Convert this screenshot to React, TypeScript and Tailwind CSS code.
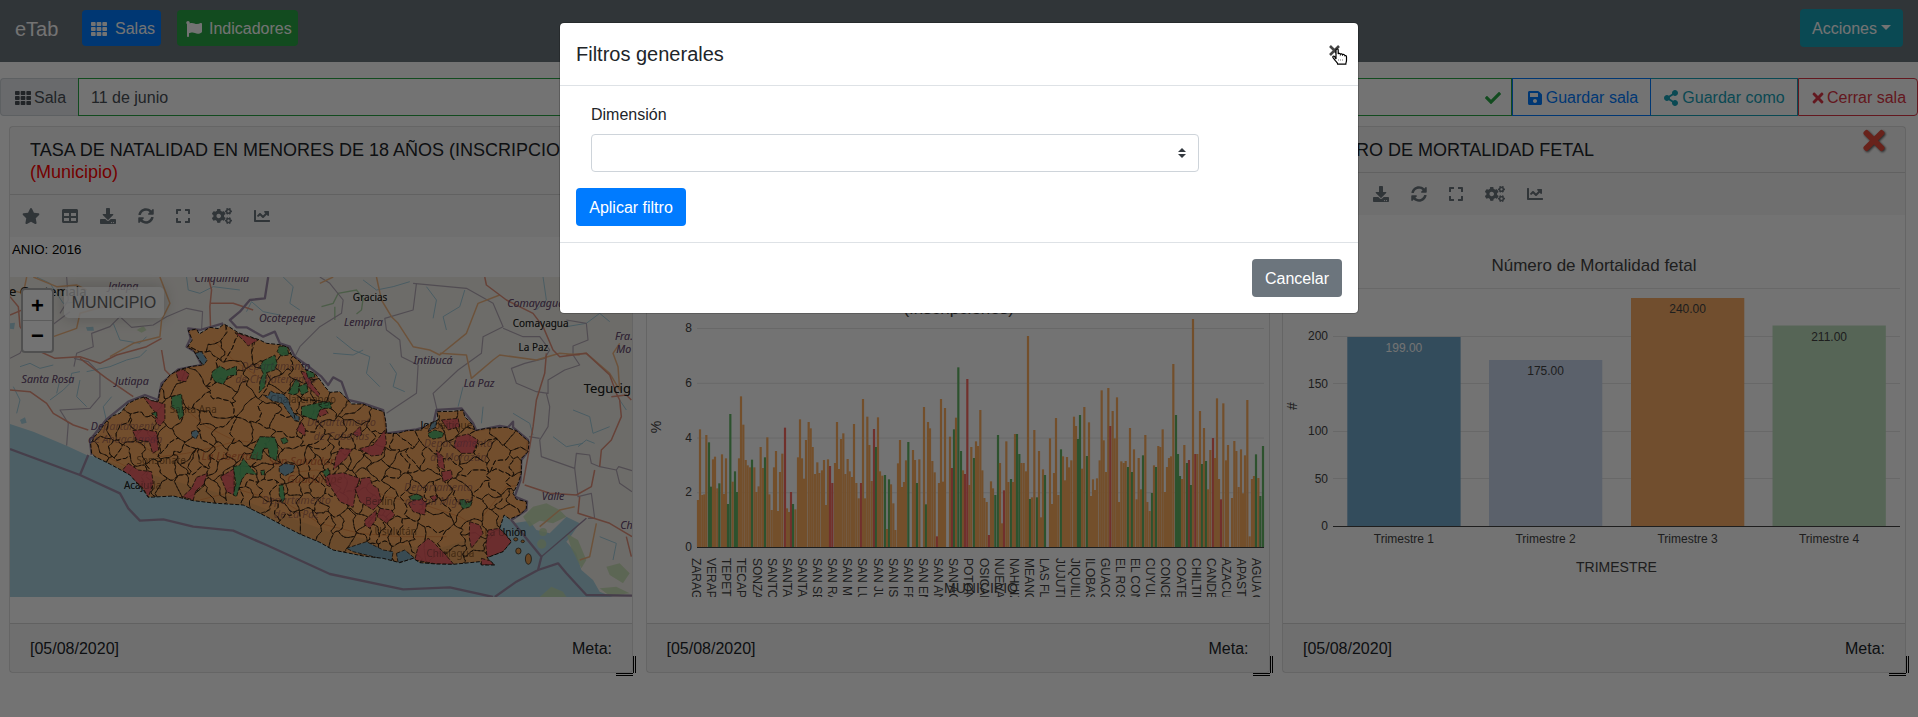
import React from 'react';
import { FaTh, FaFlag, FaCheck, FaSave, FaShareAlt, FaTimes, FaStar, FaTable, FaDownload, FaSyncAlt, FaExpand, FaCogs, FaChartLine } from 'react-icons/fa';

/* ---------- data ---------- */

const COLORS: Record<string, string> = { o: '#ffaf60', g: '#64b666', r: '#fb6a62' };

const RATES =
  '174:600 180:388 187:585 193:583 199:405 207:427g 213:560g 219:478 225:470 232:565 238:550g 246:463 252:582 258:475 264:612g 271:342g 278:545 285:514g 291:576g 297:475 303:289 310:374 317:480 323:496 330:502 336:479g 343:502 349:576 356:559 362:441 369:504 375:472g 382:412 388:583 395:630 402:502 408:453 414:633 420:516 427:461 435:383r 441:625 447:636 453:576r 459:612g 466:628 474:472 480:358 486:475 492:536 498:420 506:366 512:385 518:441 525:522 532:487 538:519 546:511 552:480 558:615 564:478 570:498r 577:549r 585:489 591:366 597:507 603:417 610:400 616:522 623:477 629:514 636:531 642:372 649:549 656:595 663:549r 669:297 675:595 682:350 688:435 695:543 702:387r 708:441g 714:352 720:514 727:527 735:525g 741:687 747:538g 753:553 760:610 766:690 774:490 780:420 786:561 792:546 798:481 805:426g 819:450 825:480 831:549g 838:478 852:321 858:613g 864:366 870:385 877:483 884:517 891:709r 897:549 903:297 909:545 915:324 930:410 936:504r 942:388g 948:353 955:202g 963:453g 969:511 975:522r 982:237r 988:555 994:441 1002:474g 1008:424 1014:438 1021:330 1027:511 1033:594 1040:606 1047:705r 1053:544 1059:565 1066:585g 1074:405g 1080:489 1086:670 1092:571r 1099:424 1105:546 1113:537g 1119:546 1125:402 1131:402g 1138:462g 1144:489 1151:489 1158:514 1164:108 1170:597g 1176:592 1183:390 1191:592g 1197:453 1203:652 1209:508 1215:525g 1230:415 1236:612 1242:519 1248:354 1255:585 1263:448g 1269:469 1275:541 1281:471 1287:502 1294:481 1302:350 1308:378 1314:417g 1320:345g 1326:506 1333:321 1341:468g 1347:367 1353:588 1359:538 1365:570 1371:535 1379:481 1385:271 1391:421 1398:516 1405:264 1411:378r 1418:333 1424:415 1431:292 1437:606 1444:484 1451:489 1457:483 1464:501g 1470:384 1476:516g 1482:448 1490:598 1496:474 1503:568 1509:466g 1516:405 1522:606 1529:633 1536:579g 1542:496 1548:501g 1555:438 1561:441 1568:388 1575:576 1581:501 1587:474 1593:469 1600:192 1608:345g 1614:462g 1620:528g 1626:537 1633:435 1641:489g 1647:480r 1653:555g 1659:57 1666:462r 1672:462 1680:333 1686:492g 1692:384 1698:483g 1704:568 1711:450 1719:414r 1725:474 1731:295 1737:537 1743:598r 1750:310 1758:481 1764:435 1776:594 1783:423 1789:453 1796:561 1803:448 1809:580 1815:466 1822:300 1829:709 1836:537 1842:528 1848:463g 1855:534 1861:588g 1869:438g';

const BARS = RATES.split(' ').map((entry) => {
  const [x, rest] = entry.split(':');
  const tone = /[gr]$/.test(rest) ? rest.slice(-1) : 'o';
  return { x: Number(x), top: parseInt(rest, 10), color: COLORS[tone] };
});

const MUNICIPIOS = [
  'ZARAGOZA', 'VERAPAZ', 'TEPETITAN', 'TECAPAN', 'SONZACATE', 'SANTO T', 'SANTA R', 'SANTA C', 'SAN SEB', 'SAN RAF', 'SAN MIG', 'SAN LUIS', 'SAN JUAN', 'SAN ISID', 'SAN FRA', 'SAN EMI', 'SAN ANT', 'SAN AGU', 'POTONI', 'OSICALA', 'NUEVA E', 'NAHUIZ', 'MEANGU', 'LAS FLO', 'JUJUTLA', 'JIQUILIS', 'ILOBASC', 'GUACO', 'EL ROSA', 'EL CONG', 'CUYULT', 'CONCEP', 'COATEP', 'CHILTIU', 'CANDEL', 'AZACUA', 'APASTE', 'AGUA CA',
];

const QUARTERS = [
  { label: 'Trimestre 1', value: '199.00', x: 1347.3, top: 337, color: '#71a9cc', ink: '#fff' },
  { label: 'Trimestre 2', value: '175.00', x: 1489, top: 360, color: '#cad7ee', ink: '#444' },
  { label: 'Trimestre 3', value: '240.00', x: 1631, top: 298, color: '#fbad66', ink: '#444' },
  { label: 'Trimestre 4', value: '211.00', x: 1772.5, top: 325.5, color: '#bfe0bf', ink: '#444' },
];

/* ---------- map geometry ---------- */

const COUNTRY: [number, number][] = [
  [275, 640], [272, 612], [284, 590], [300, 572], [318, 545], [340, 527], [360, 520], [385, 490], [410, 478], [435, 470], [455, 482], [475, 484], [480, 450], [490, 430], [510, 405], [535, 390], [570, 380], [608, 375], [592, 350], [580, 330], [562, 322], [577, 300], [565, 272], [590, 267], [598, 282], [630, 262], [655, 266], [672, 252], [690, 262], [715, 278], [745, 288], [780, 300], [800, 310], [840, 314], [865, 322], [875, 345], [900, 365], [915, 388], [945, 400], [965, 425], [975, 440], [990, 457], [1020, 455], [1040, 475], [1055, 492], [1090, 492], [1120, 505], [1152, 515], [1158, 545], [1160, 580], [1195, 580], [1220, 572], [1260, 570], [1290, 550], [1315, 540], [1312, 515], [1360, 514], [1390, 510], [1395, 530], [1420, 555], [1426, 572], [1460, 565], [1520, 562], [1550, 572], [1570, 590], [1588, 605], [1585, 635], [1565, 655], [1565, 700], [1555, 730], [1540, 760], [1550, 778], [1580, 785], [1580, 805], [1560, 825], [1530, 837], [1513, 825], [1505, 850], [1500, 865], [1520, 885], [1535, 905], [1510, 935], [1462, 953], [1485, 975], [1445, 975], [1440, 965], [1390, 970], [1360, 973], [1310, 972], [1260, 968], [1240, 955], [1200, 968], [1150, 955], [1090, 948], [1040, 938], [1000, 930], [960, 907], [900, 882], [850, 857], [800, 830], [730, 795], [700, 793], [650, 790], [580, 782], [520, 768], [445, 772], [430, 750], [390, 705], [330, 672], [285, 650],
];

const toPoints = (pts: number[][]) => pts.map((p) => p[0].toFixed(1) + ',' + p[1].toFixed(1)).join(' ');

function inside(x: number, y: number) {
  let hit = false;
  for (let i = 0, j = COUNTRY.length - 1; i < COUNTRY.length; j = i++) {
    const [xi, yi] = COUNTRY[i];
    const [xj, yj] = COUNTRY[j];
    if (yi > y !== yj > y && x < ((xj - xi) * (y - yi)) / (yj - yi) + xi) hit = !hit;
  }
  return hit;
}

/* Bends straight cell edges so neighbouring borders stay shared but look irregular. */
const warp = ([x, y]: number[]) => [
  x + 6 * Math.sin(y / 9 + x / 31) + 4 * Math.sin(y / 4.7),
  y + 7 * Math.sin(x / 11 - y / 37) + 3 * Math.sin(x / 5.3),
];

function buildCells() {
  let seed = 977;
  const rand = () => {
    seed = (seed * 16807) % 2147483647;
    return seed / 2147483647;
  };
  const sites: number[][] = [];
  for (let row = 0; row < 15; row++) {
    for (let col = 0; col < 32; col++) {
      const x = 265 + (col + rand() * 1.3) * 42;
      const y = 250 + (row + rand() * 1.3) * 51;
      const keep = rand();
      const sparse = (y < 560 && x < 900) || (x > 1150 && y > 800);
      if (inside(x, y) && keep > (sparse ? 0.45 : 0.08)) sites.push([x, y]);
    }
  }
  return sites.map((site, index) => {
    let cell: number[][] = [
      [site[0] - 130, site[1] - 130],
      [site[0] + 130, site[1] - 130],
      [site[0] + 130, site[1] + 130],
      [site[0] - 130, site[1] + 130],
    ];
    sites.forEach((other, otherIndex) => {
      if (otherIndex === index || Math.abs(other[0] - site[0]) > 260 || Math.abs(other[1] - site[1]) > 260) return;
      const nx = other[0] - site[0];
      const ny = other[1] - site[1];
      const limit = (nx * (other[0] + site[0]) + ny * (other[1] + site[1])) / 2;
      const next: number[][] = [];
      cell.forEach((a, k) => {
        const b = cell[(k + 1) % cell.length];
        const da = nx * a[0] + ny * a[1] - limit;
        const db = nx * b[0] + ny * b[1] - limit;
        if (da <= 0) next.push(a);
        if (da * db < 0) {
          const t = da / (da - db);
          next.push([a[0] + (b[0] - a[0]) * t, a[1] + (b[1] - a[1]) * t]);
        }
      });
      cell = next;
    });
    const bent: number[][] = [];
    cell.forEach((a, k) => {
      const b = cell[(k + 1) % cell.length];
      for (let s = 0; s < 6; s++) bent.push(warp([a[0] + ((b[0] - a[0]) * s) / 6, a[1] + ((b[1] - a[1]) * s) / 6]));
    });
    return bent;
  });
}

const CELLS = buildCells();

const RED_AREAS = [
  '705,278 740,288 775,300 745,318 730,300', '528,395 550,388 568,402 558,425 535,422', '430,470 465,484 495,492 495,540 480,558 466,545 470,520 455,505',
  '398,572 430,568 470,575 476,630 458,640 448,605 410,600', '385,670 415,690 455,695 460,730 445,772 430,745 368,690', '590,712 623,700 610,735 588,752 580,780 548,770 575,745',
  '662,710 703,686 703,765 680,755', '903,393 925,400 935,430 960,462 955,470 925,440', '890,570 905,545 917,568 915,588', '950,515 975,505 985,520 960,530',
  '975,700 990,690 990,740 980,735', '1155,570 1160,610 1145,645 1115,648 1078,626 1120,615', '1060,580 1082,558 1085,585 1070,590', '1020,625 1058,628 1040,655 1000,690 1008,650',
  '980,705 1030,698 1080,715 1070,745 1060,802 1020,785 995,745', '1085,715 1110,712 1118,735 1135,745 1145,785 1120,810 1080,785 1065,745 1080,735', '1095,840 1130,810 1128,840 1110,865 1095,855', '1140,805 1175,810 1185,825 1160,850 1132,830',
  '1225,790 1260,770 1280,790 1275,825 1240,815', '1255,920 1285,895 1300,905 1318,925 1330,935 1362,973 1310,972 1245,960', '1325,540 1375,535 1380,560 1345,570 1335,555', '1370,590 1405,582 1435,600 1420,640 1385,640 1362,620',
  '1310,630 1330,650 1335,690 1315,680', '1325,695 1355,690 1358,715 1330,725', '1410,845 1440,855 1450,880 1435,900 1415,925 1408,890', '1465,870 1500,865 1535,905 1510,935 1462,953 1458,915', '1445,955 1470,962 1485,975 1445,975', '1290,770 1312,765 1305,785',
];

const GREEN_AREAS = [
  '637,395 660,378 680,390 710,378 710,405 685,408 670,433 645,425 635,408', '790,362 825,345 832,370 825,390 800,398 795,440 778,458 780,425 790,400 780,380', '838,318 862,320 867,345 845,348 832,335',
  '515,470 545,462 548,505 552,525 538,540 530,510 515,500', '888,417 900,430 895,460 880,465 865,460', '895,440 920,430 925,455 905,465', '918,392 940,390 945,410 925,415',
  '905,500 940,492 975,485 1000,490 960,510 950,540 930,535 905,525', '780,590 825,592 835,625 830,663 808,650 805,625 790,625 785,660 750,655 765,620', '842,597 857,592 866,605 850,613', '700,680 720,675 730,655 750,680 772,705 740,700 725,720 710,770 700,765 708,730',
  '838,735 850,735 855,775 848,788 838,765', '968,695 985,685 990,700 978,712', '782,692 795,690 793,705 785,705', '1285,580 1305,570 1332,578 1328,592 1300,597 1287,590', '1227,770 1250,762 1268,770 1260,780 1235,780', '1380,780 1395,778 1400,790 1418,783 1412,800 1390,807 1382,795', '455,520 470,515 472,535 462,525', '955,495 990,485 995,505 970,505',
];

const LAKES = [
  '585,340 605,335 622,360 612,375 598,365', '575,575 590,570 597,580 588,597 575,588', '838,680 855,670 885,675 880,695 855,708 838,695',
  '790,465 805,468 812,452 822,458 850,462 865,478 872,500 895,545 885,542 862,512 848,490 818,483 800,472', '882,520 898,530 898,545 886,540', '1285,575 1295,550 1312,540 1308,562',
  '1040,925 1100,905 1130,920 1150,930 1180,935 1175,965 1120,950 1060,935', '1190,940 1215,930 1245,955 1195,968',
];

const PROVINCE_LINES = [
  'M30 355 L60 340 L90 285 L150 260 L210 215', 'M222 380 L230 340 L280 320 L275 280 L330 260 L360 230 L395 262 L460 255 L500 230 L560 205 L608 215 L605 270 L565 272', 'M222 355 L265 365 L300 400 L300 470 L270 505 L180 510 L205 550 L200 617',
  'M180 220 L205 180 L200 111', 'M960 111 L990 130 L1030 180 L1025 220 L960 260 L900 320 L885 350', 'M1250 130 L1240 210 L1155 235 L1160 270 L1200 300 L1205 350 L1255 375 L1250 460 L1160 520',
  'M1240 130 L1400 145 L1480 190 L1510 260 L1450 290 L1445 340 L1375 390 L1300 460 L1312 510', 'M1510 265 L1570 290 L1620 290 L1650 330 L1635 355 L1575 370 L1535 385 L1550 430 L1610 455 L1645 460 L1645 420 L1695 390 L1740 375 L1720 345 L1720 318 L1765 300 L1760 250 L1700 240',
  'M1640 460 L1650 500 L1645 560 L1620 600 L1625 650 L1725 685 L1730 640 L1770 645 L1775 670 L1800 680 L1850 690 L1857 680 L1897 692', 'M1725 685 L1735 770 L1775 760 L1785 835 L1765 835', 'M1850 690 L1860 730 L1897 755', 'M1588 590 L1620 595',
];

const RIVERS = [
  'M60 380 L90 370 L120 385 L160 375', 'M150 480 L190 450 L210 430 L215 400 L240 395', 'M260 395 L330 380 L380 360 L420 350 L440 330', 'M320 545 L310 500 L335 470', 'M340 250 L360 300 L420 310 L440 290', 'M110 111 L150 130 L190 190 L240 185',
  'M850 111 L880 140 L870 190 L900 210', 'M560 111 L565 150 L600 160 L640 140 L720 150', 'M740 215 L755 185 L790 215 L840 225', 'M1010 290 L1060 330 L1110 350 L1100 400 L1140 440', 'M1000 340 L1060 345 L1090 330', 'M1170 370 L1190 400 L1180 440 L1215 455',
  'M1090 120 L1130 150 L1180 140 L1230 125', 'M1280 140 L1310 180 L1300 235', 'M1395 150 L1380 200 L1330 230 L1340 270', 'M1450 500 L1445 550', 'M1630 111 L1640 180 L1610 210', 'M1720 510 L1770 530 L1780 580 L1830 560', 'M1660 590 L1700 620 L1750 610', 'M1700 260 L1760 250 L1800 220 L1830 245', 'M1735 620 L1760 600 L1785 610', 'M1390 440 L1375 500', 'M1800 890 L1850 910 L1840 960', 'M1540 520 L1590 550 L1600 585', 'M1860 480 L1880 510', 'M40 440 L60 480 L50 520', 'M180 420 L170 460', 'M240 420 L230 470 L260 500',
];

const ORANGE_ROADS = [
  'M1130 111 L1145 180 L1175 230 L1195 250 L1240 320 L1290 330 L1320 345 L1400 280 L1435 190 L1500 165', 'M1320 340 L1400 345 L1415 415 L1480 360 L1500 345 L1610 360 L1680 340 L1740 345', 'M1700 345 L1760 340 L1830 400 L1860 450 L1855 380 L1840 340 L1860 310', 'M480 111 L510 190 L485 240 L480 290 L400 310 L330 350', 'M120 330 L160 290 L230 265 L240 220 L310 200', 'M1620 860 L1680 810 L1725 800', 'M1790 850 L1770 950 L1740 960', 'M30 150 L70 160 L80 111', 'M100 111 L170 140 L230 135 L260 150', 'M960 130 L1000 111',
];

const RED_ROADS = [
  'M30 170 L55 200 L60 260 L110 330 L165 355 L240 350 L300 370 L350 345 L440 320 L485 295', 'M240 355 L320 415 L400 470', 'M30 450 L90 455 L140 490 L160 520 L220 555 L265 570', 'M625 111 L635 150 L630 200 L632 262', 'M632 190 L700 190 L760 210', 'M485 330 L495 390 L510 405',
  'M1455 111 L1460 135 L1520 180 L1600 220 L1630 260 L1660 330 L1680 350 L1720 345 L1760 340 L1830 405 L1850 460 L1860 480 L1865 530 L1835 600 L1805 630 L1800 680', 'M1640 340 L1635 400 L1610 480 L1600 560 L1590 620 L1570 730', 'M1575 735 L1650 760 L1730 765 L1775 740 L1785 690', 'M1740 770 L1735 820 L1830 850 L1897 890', 'M30 225 L90 200 L130 220', 'M1880 890 L1895 950', 'M1835 470 L1880 465 L1895 480',
];

const INNER_ROADS = [
  'M400 600 L480 650 L560 640 L650 620 L720 600', 'M560 510 L620 560 L700 600 L780 610 L830 640', 'M850 700 L950 690 L1060 720 L1160 770 L1260 790 L1380 830 L1460 880', 'M640 300 L700 360 L790 420', 'M1440 840 L1520 740 L1565 735', 'M600 780 L720 750 L860 790 L960 850 L1080 880 L1200 890 L1340 890', 'M320 650 L400 690 L470 735',
];

type Label = { x: number; y: number; t: string; kind?: 'city' | 'big' | 'red'; anchor?: 'start' };

const PLACES: Label[] = [
  { x: 370, y: 149, t: 'Jalapa' }, { x: 666, y: 126, t: 'Chiquimula' }, { x: 862, y: 247, t: 'Ocotepeque' }, { x: 144, y: 430, t: 'Santa Rosa' }, { x: 396, y: 434, t: 'Jutiapa' },
  { x: 1091, y: 257, t: 'Lempira' }, { x: 1300, y: 371, t: 'Intibucá' }, { x: 1438, y: 441, t: 'La Paz' }, { x: 1608, y: 202, t: 'Comayagua' }, { x: 1846, y: 300, t: 'Fra.', anchor: 'start' }, { x: 1850, y: 340, t: 'Mo', anchor: 'start' },
  { x: 1660, y: 781, t: 'Valle' }, { x: 1862, y: 868, t: 'Ch', anchor: 'start' }, { x: 828, y: 389, t: 'Departamento' }, { x: 828, y: 430, t: 'de Chalatenango' }, { x: 376, y: 570, t: 'Departamento' }, { x: 376, y: 610, t: 'de Ahuachapán' },
  { x: 1025, y: 559, t: 'Departamento' }, { x: 1025, y: 600, t: 'de Cabañas' }, { x: 1376, y: 622, t: 'Departamento' }, { x: 1376, y: 662, t: 'de Morazán' }, { x: 1316, y: 754, t: 'Departamento' }, { x: 1316, y: 795, t: 'de San Miguel' },
  { x: 890, y: 793, t: 'Departamento' }, { x: 890, y: 834, t: 'de La Paz' },
  { x: 1111, y: 182, t: 'Gracias', kind: 'city' }, { x: 1623, y: 261, t: 'Comayagua', kind: 'city' }, { x: 1601, y: 332, t: 'La Paz', kind: 'city' }, { x: 428, y: 748, t: 'Acajutla', kind: 'city' }, { x: 1517, y: 887, t: 'La Unión', kind: 'city' },
  { x: 910, y: 490, t: 'Chalatenango', kind: 'city' }, { x: 580, y: 518, t: 'Santa Ana', kind: 'city' }, { x: 484, y: 671, t: 'Sonsonate', kind: 'city' }, { x: 1340, y: 568, t: 'Jocoaitique', kind: 'city' }, { x: 1138, y: 795, t: 'Berlín', kind: 'city' }, { x: 1188, y: 885, t: 'Usulután', kind: 'city' }, { x: 1352, y: 952, t: 'Chirilagua', kind: 'city' },
  { x: 690, y: 660, t: 'La Libertad', kind: 'red' }, { x: 905, y: 675, t: 'San Salvador', kind: 'red' }, { x: 945, y: 728, t: 'Guadalupe', kind: 'red' }, { x: 1752, y: 459, t: 'Tegucig', kind: 'big', anchor: 'start' }, { x: 27, y: 167, t: 'e Guatemala', kind: 'big', anchor: 'start' },
];

function PlaceLabel({ p }: { p: Label }) {
  const look = p.kind === 'city' ? 'fill-[#222222] text-[30px]' : p.kind === 'big' ? 'fill-[#222222] text-[39px]' : p.kind === 'red' ? 'fill-[#b0463c] text-[34px] italic' : 'fill-[#6d4f75] text-[32px] italic';
  return (
    <text x={p.x} y={p.y} textAnchor={p.anchor ?? 'middle'} className={look}>
      {p.t}
    </text>
  );
}

function RegionMap() {
  return (
    <svg viewBox="30 111 1867 960" preserveAspectRatio="none" className="block h-[320px] w-full font-['Noto_Sans',sans-serif]">
      <defs>
        <clipPath id="country">
          <polygon points={toPoints(COUNTRY)} />
        </clipPath>
      </defs>
      <rect x="30" y="111" width="1867" height="960" fill="#f2efe9" />
      <polygon fill="#aad3df" points="30,552 100,575 200,617 260,645 285,650 400,690 700,770 1000,880 1300,930 1470,880 1513,822 1540,850 1590,842 1610,870 1650,880 1700,830 1740,850 1712,890 1700,905 1730,940 1745,990 1780,1020 1800,1055 1840,1071 30,1071" />
      <g fill="#c5dfb0" opacity="0.8">
        <path d="M1570 830 L1600 800 L1640 790 L1680 810 L1700 830 L1660 850 L1620 842 L1590 860 Z" />
        <path d="M1700 880 L1735 900 L1760 960 L1745 985 L1715 925 Z" />
        <path d="M1820 980 L1860 970 L1890 1000 L1870 1030 L1830 1005 Z M1800 1045 L1850 1040 L1890 1060 L1830 1068 Z" />
        <path d="M1620 1071 L1655 1040 L1690 1055 L1700 1071 Z" />
        <path d="M410 270 L430 258 L440 270 L425 278 Z" />
        <circle cx="1626" cy="912" r="14" />
        <circle cx="1630" cy="876" r="12" />
      </g>
      <path fill="none" stroke="#a9cfa0" strokeWidth="4" d="M965 200 L1000 190 L1015 160 L1070 150 L1090 175 L1085 210 L1070 222 M1005 200 L1005 240" />
      <path fill="#aad3df" d="M258 262 L280 260 L282 272 L262 272 Z M60 540 L75 532 L80 548 L65 552 Z M30 250 L45 248 L42 268 L30 266 Z" />
      <g fill="none" stroke="#a3cddb" strokeWidth="3">{RIVERS.map((d) => <path key={d} d={d} />)}</g>
      <g fill="none" stroke="#b3a9b5" strokeWidth="3.5" strokeLinejoin="round">{PROVINCE_LINES.map((d) => <path key={d} d={d} />)}</g>
      <g fill="none" stroke="#f0b783" strokeWidth="4.5" strokeLinejoin="round">{ORANGE_ROADS.map((d) => <path key={d} d={d} />)}</g>
      <g fill="none" stroke="#e2927c" strokeWidth="4.5" strokeLinejoin="round">{RED_ROADS.map((d) => <path key={d} d={d} />)}</g>
      <g fill="none" stroke="#9c8aa5" strokeWidth="7" strokeLinejoin="round">
        <path d="M805 111 L795 175 L750 180 L720 215 L690 240 L710 262 L740 262 L790 290 L825 275 L840 310 L870 320 L885 350 L920 375 L965 410 L985 435 L1000 412 L1025 425 L1045 480 L1090 490 L1150 510 L1160 580 L1250 568 L1300 555 L1310 510 L1385 505 L1420 550 L1430 572 L1500 558 L1525 562 L1540 545 L1540 562 L1585 600 L1580 640 L1565 660 L1562 720 L1545 770 L1582 785 L1580 810 L1535 840 L1625 950 L1615 990 L1550 1025 L1485 1071" />
        <path d="M30 627 L240 705 L265 645 M240 705 L360 760 L385 805 L420 842 L490 838 L580 860 L700 872 L800 915 L990 1002 L1210 1048 L1350 1042 L1480 1071 M1615 990 L1675 970 L1700 1000 L1760 1065 L1897 1067" />
        <path d="M275 645 L270 600 L320 538 L385 485 L435 465 L475 480 L485 430 L535 388 L605 375 L585 335 L560 320 L572 295 L565 265 L600 270 L670 250" />
        <path strokeWidth="4" d="M1625 950 L1760 835" />
      </g>
      <g>{PLACES.map((p) => <PlaceLabel key={p.t + p.x + p.y} p={p} />)}</g>
      <g clipPath="url(#country)">
        <polygon points={toPoints(COUNTRY)} fill="#ff9c42" opacity="0.8" />
        <g fill="none" stroke="#e8853c" strokeWidth="3" opacity="0.6">{INNER_ROADS.map((d) => <path key={d} d={d} />)}</g>
        <g fill="none" stroke="#2a1c10" strokeWidth="2.4" strokeDasharray="16 6">
          {CELLS.map((cell, i) => <polygon key={i} points={toPoints(cell)} />)}
        </g>
        <g stroke="#2a1c10" strokeWidth="2.4" strokeDasharray="12 5">
          {RED_AREAS.map((points) => <polygon key={points} points={points} fill="#ee5f66" fillOpacity="0.92" />)}
          {GREEN_AREAS.map((points) => <polygon key={points} points={points} fill="#55b56f" fillOpacity="0.93" />)}
          {LAKES.map((points) => <polygon key={points} points={points} fill="#7fa6b8" />)}
        </g>
      </g>
      <polygon points={toPoints(COUNTRY)} fill="none" stroke="#1f1812" strokeWidth="3" strokeDasharray="12 5" />
      <g fill="#e59c50" stroke="#1f1812" strokeWidth="2">
        <ellipse cx="1556" cy="933" rx="8" ry="9" />
        <ellipse cx="1586" cy="957" rx="9" ry="16" />
        <ellipse cx="1548" cy="898" rx="6" ry="5" />
        <ellipse cx="1569" cy="904" rx="5" ry="4" />
      </g>
      <g opacity="0.35" aria-hidden="true">{PLACES.map((p) => <PlaceLabel key={p.t + p.x + p.y} p={p} />)}</g>
    </svg>
  );
}

function RateChart() {
  return (
    <svg viewBox="21 -189 1866 1080" preserveAspectRatio="none" className="block h-[360px] w-full">
      <text x="956" y="42" textAnchor="middle" className="fill-[#444444] text-[51px]">(Inscripciones)</text>
      {[0, 2, 4, 6, 8].map((n) => (
        <g key={n}>
          {n > 0 && <rect x="171" y={741 - n * 82.1} width="1701" height="3" fill="#e6e6e6" />}
          <text x="156" y={753 - n * 82.1} textAnchor="end" className="fill-[#444444] text-[36px]">{n}</text>
        </g>
      ))}
      {BARS.map((b) => <rect key={b.x} x={b.x - 3.3} y={b.top} width="6.6" height={742 - b.top} fill={b.color} />)}
      <rect x="171" y="741" width="1701" height="3" fill="#444" />
      <text transform="translate(62 381) rotate(-90)" textAnchor="middle" className="fill-[#444444] text-[42px]">%</text>
      {MUNICIPIOS.map((name, i) => (
        <text key={name} transform={`translate(${156 + i * 45.4 + (i > 19 ? 1 : 0)} 774) rotate(90)`} className="fill-[#444444] text-[36px]">{name}</text>
      ))}
      <text x="1023" y="878" textAnchor="middle" className="fill-[#444444] text-[42px]">MUNICIPIO</text>
    </svg>
  );
}

function QuarterChart() {
  return (
    <svg viewBox="1283 215 622 381" preserveAspectRatio="none" className="block h-[381px] w-full">
      <text x="1594" y="271" textAnchor="middle" className="fill-[#444444] text-[17px]">Número de Mortalidad fetal</text>
      {[0, 50, 100, 150, 200, 250].map((n) => (
        <g key={n}>
          {n > 0 && <rect x="1333" y={Math.floor(526 - n * 0.95)} width="567" height="1" fill="#e6e6e6" />}
          <text x="1328" y={530 - n * 0.95} textAnchor="end" className="fill-[#444444] text-[12px]">{n}</text>
        </g>
      ))}
      {QUARTERS.map((q) => (
        <g key={q.label} className="text-[12px]">
          <rect x={q.x} y={q.top} width="113.3" height={526 - q.top} fill={q.color} />
          <text x={q.x + 56.6} y={q.top + 15} textAnchor="middle" fill={q.ink}>{q.value}</text>
          <text x={q.x + 56.6} y="543" textAnchor="middle" fill="#444">{q.label}</text>
        </g>
      ))}
      <rect x="1333" y="526" width="567" height="1" fill="#444" />
      <text transform="translate(1297 406) rotate(-90)" textAnchor="middle" className="fill-[#444444] text-[14px]">#</text>
      <text x="1616.5" y="572" textAnchor="middle" className="fill-[#444444] text-[14px]">TRIMESTRE</text>
    </svg>
  );
}

/* ---------- page parts ---------- */

function Toolbar({ star }: { star: boolean }) {
  return (
    <div className="flex h-[42px] shrink-0 items-center gap-[22px] bg-black/3 pl-3 text-base text-[#6c757d]">
      {star && <FaStar className="w-[18px]" />}
      <FaTable className="w-4" />
      <FaDownload className="w-4" />
      <FaSyncAlt className="w-4" />
      <FaExpand className="w-3.5" />
      <FaCogs className="w-5" />
      <FaChartLine className="w-4" />
    </div>
  );
}

function Card({ title, note, close, children }: { title: string; note?: string; close?: boolean; children: React.ReactNode }) {
  return (
    <section className="relative flex h-[547px] w-[624px] shrink-0 flex-col rounded border border-black/12.5 bg-white">
      <header className={note ? 'h-[68px] shrink-0 border-b border-black/12.5 bg-black/3 px-5 pt-3' : 'h-[46px] shrink-0 border-b border-black/12.5 bg-black/3 px-5 pt-3'}>
        <h2 className="overflow-hidden text-[18px] leading-[22px] whitespace-nowrap text-[#212529]">{title}</h2>
        {note && <p className="text-[18px] leading-[22px] text-[#ff0000]">{note}</p>}
      </header>
      {close && <FaTimes className="absolute top-[-2px] right-[19px] h-[31px] w-[24px] text-[#e74c3c] drop-shadow-[1px_1px_1px_#555]" />}
      <Toolbar star />
      <div className="min-h-0 flex-1 overflow-hidden">{children}</div>
      <footer className="flex h-[49px] shrink-0 items-center justify-between border-t border-black/12.5 bg-black/3 px-5 pt-px text-base text-[#212529]">
        <span>[05/08/2020]</span>
        <span>Meta:</span>
      </footer>
      <svg viewBox="0 0 21 21" className="absolute -right-[4px] -bottom-[4px] z-30 size-[21px]">
        <path d="M18.5 1v17M20.5 1v17M1 18.5h17M1 20.5h17" stroke="#000" fill="none" />
      </svg>
    </section>
  );
}

export default function App() {
  return (
    <div className="relative h-[717px] w-[1918px] overflow-hidden bg-white font-['Liberation_Sans',Arial,sans-serif] text-base text-[#212529]">
      <nav className="flex h-[62px] items-center bg-[#6c757d] pr-[15px] pl-[15px] text-white">
        <span className="mt-[-5px] w-[67px] text-xl">eTab</span>
        <button className="mt-[-6px] flex h-9 w-[79px] items-center gap-2 rounded bg-[#007bff] pt-px pl-[9px]">
          <FaTh className="size-4" />
          Salas
        </button>
        <button className="mt-[-6px] ml-4 flex h-9 w-[121px] items-center gap-[7px] rounded bg-[#28a745] pt-px pl-[9px]">
          <FaFlag className="h-4 w-4" />
          Indicadores
        </button>
        <button className="mt-[-6px] ml-auto flex h-[38px] w-[103px] items-center justify-center gap-1 rounded bg-[#17a2b8] pt-px">
          Acciones
          <i className="mb-[3px] border-x-[5px] border-t-[5px] border-x-transparent border-t-white" />
        </button>
      </nav>

      <div className="mt-4 flex h-[38px]">
        <span className="flex w-[78px] items-center gap-[3px] rounded-l border border-r-0 border-[#ced4da] bg-[#e9ecef] pt-px pl-[14px] text-[#495057]">
          <FaTh className="size-4" />
          Sala
        </span>
        <div className="flex w-[1434px] items-center justify-between border border-[#28a745] pt-px pr-[10px] pl-3 text-[#495057]">
          11 de junio
          <FaCheck className="size-4 text-[#28a745]" />
        </div>
        <button className="flex w-[139px] items-center justify-center gap-[3px] border border-[#007bff] pt-px pl-0.5 text-[#007bff]">
          <FaSave className="size-4" />
          Guardar sala
        </button>
        <button className="flex w-[147px] items-center justify-center gap-[3px] border border-l-0 border-[#17a2b8] pt-px text-[#17a2b8]">
          <FaShareAlt className="size-4" />
          Guardar como
        </button>
        <button className="flex flex-1 items-center justify-center gap-[3px] rounded-r border border-[#dc3545] pt-px pl-0.5 text-[#dc3545]">
          <FaTimes className="h-4 w-3" />
          Cerrar sala
        </button>
      </div>

      <main className="flex gap-[12.5px] pt-[10px] pl-[9px]">
        <Card title="TASA DE NATALIDAD EN MENORES DE 18 AÑOS (INSCRIPCIONES)" note="(Municipio)">
          <p className="h-[40px] pt-[3px] pl-[2px] text-[13.3px] leading-5 text-black">ANIO: 2016</p>
          <div className="relative">
            <RegionMap />
            <div className="absolute top-[11px] left-[11px] flex w-[33px] flex-col rounded border-2 border-black/30 bg-white text-center font-bold text-black">
              <span className="h-[31px] border-b border-[#ccc] text-[22px] leading-[32px]">+</span>
              <span className="h-[30px] text-[22px] leading-[30px]">−</span>
            </div>
            <div className="absolute top-[10px] left-[54px] h-[31px] w-[100px] rounded-[5px] bg-white/80 text-center text-base leading-[31px] text-[#666666] shadow-[0_0_15px_rgba(0,0,0,0.2)]">MUNICIPIO</div>
          </div>
        </Card>
        <Card title="TASA DE NATALIDAD EN MENORES DE 18 AÑOS" note="(Municipio)">
          <RateChart />
        </Card>
        <Card title="NÚMERO DE MORTALIDAD FETAL" close>
          <QuarterChart />
        </Card>
      </main>

      <div className="absolute inset-0 z-20 bg-black/55" />

      <div role="dialog" className="absolute top-[22px] left-[559px] z-40 flex h-[292px] w-[800px] flex-col rounded-[5px] border border-black/20 bg-white bg-clip-padding">
        <div className="flex h-[63px] items-center justify-between border-b border-[#dee2e6] pr-[18px] pl-4">
          <h5 className="text-xl">Filtros generales</h5>
          <span className="relative mb-2 size-[11px]">
            <svg viewBox="0 0 11 11" className="block size-[11px]">
              <path d="M1 1l9 9M10 1l-9 9" stroke="#444" strokeWidth="2.6" />
            </svg>
            <svg viewBox="0 0 16 18" className="absolute top-[3px] left-[2px] h-[18px] w-[17px]">
              <path d="M4.5 11V2.2c0-1.6 2.2-1.6 2.2 0V6c.3-.9 2.1-.8 2.2.3.4-.8 2-.7 2.2.5.6-.7 2.2-.5 2.3.9 1-.3 1.6.2 1.6 1.3v3.6c0 1.3-.7 1.8-.7 3.6H6.2c0-1.6-1.4-2.3-2.6-3.8L1.5 9.6C.7 8.3 2.3 7.5 3.2 8.6Z" fill="#fff" stroke="#000" strokeWidth="1.2" />
              <path d="M6.500 12h6" stroke="#777" strokeWidth="1" strokeDasharray="1 1" />
            </svg>
          </span>
        </div>
        <div className="flex h-[157px] flex-col items-start border-b border-[#dee2e6] px-4 pt-4">
          <label className="ml-[15px] h-6 pt-px leading-6">Dimensión</label>
          <div className="mt-2 ml-[15px] flex h-[38px] w-[608px] items-center justify-end rounded border border-[#ced4da] pr-3">
            <svg viewBox="0 0 4 5" className="h-[10px] w-2">
              <path fill="#343a40" d="M2 0L0 2h4zm0 5L0 3h4z" />
            </svg>
          </div>
          <button className="mt-4 h-[38px] w-[110px] rounded bg-[#007bff] pt-px text-white">Aplicar filtro</button>
        </div>
        <div className="flex flex-1 items-center justify-end pr-4">
          <button className="h-[38px] w-[90px] rounded bg-[#6c757d] pt-px text-white">Cancelar</button>
        </div>
      </div>
    </div>
  );
}
